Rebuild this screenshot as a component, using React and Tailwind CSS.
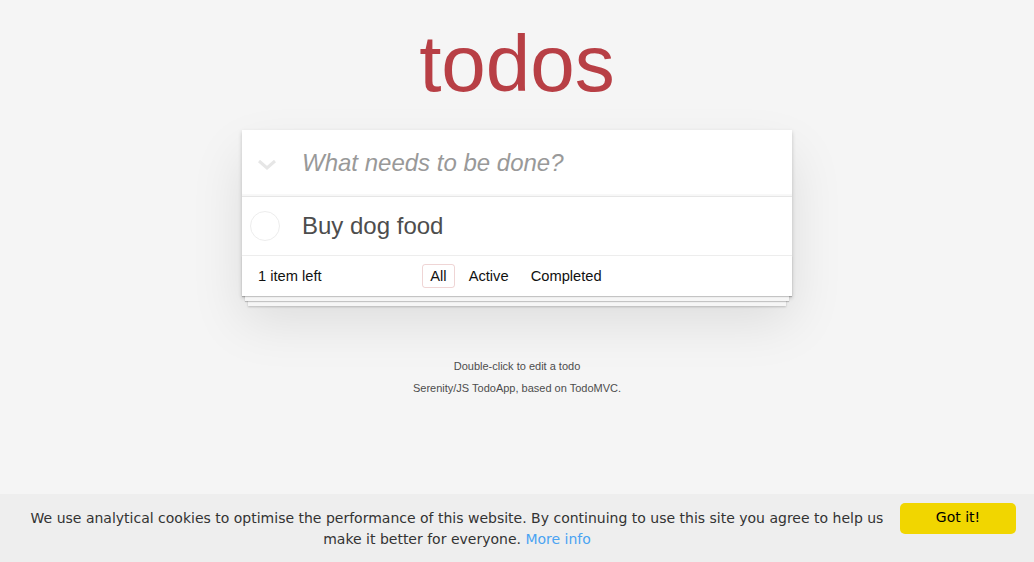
export default function App() {
  return (
    <div className="min-h-screen bg-[#f5f5f5] font-['Liberation_Sans',Arial,sans-serif] text-[14px] leading-[1.4] text-[#4d4d4d]">
      <div className="w-[550px] mx-auto pt-[8px]">
        <h1 className="text-[80px] leading-[112px] text-center text-[#b83f45] font-normal">todos</h1>
        <section className="mt-[10px] bg-white shadow-[0_2px_4px_0_rgba(0,0,0,0.2),0_25px_50px_0_rgba(0,0,0,0.1)]">
          <header className="h-[66px] flex items-center shadow-[inset_0_-2px_1px_rgba(0,0,0,0.03)]">
            <div className="w-[60px] h-full flex items-center justify-center">
              <svg width="20" height="12" viewBox="0 0 20 12" className="ml-[-10px] mt-[4px]">
                <polyline points="2,2 10,9 18,2" fill="none" stroke="#e6e6e6" strokeWidth="3" strokeLinecap="butt" strokeLinejoin="miter" />
              </svg>
            </div>
            <input
              className="flex-1 h-full pr-[16px] bg-transparent outline-none text-[24px] text-[#4d4d4d] placeholder:italic placeholder:text-[#999] font-['Liberation_Sans',Arial,sans-serif]"
              placeholder="What needs to be done?"
            />
          </header>
          <ul className="border-t border-[#e6e6e6]">
            <li className="flex items-center border-b border-[#ededed] h-[59px]">
              <div className="w-[60px] pl-[8px] flex items-center">
                <span className="w-[30px] h-[30px] rounded-full border border-[#ededed]"></span>
              </div>
              <label className="text-[24px] leading-[1.2] text-[#4d4d4d]">Buy dog food</label>
            </li>
          </ul>
          <footer className="h-[40px] px-[15px] grid grid-cols-[1fr_auto_1fr] items-center text-[#111] text-[14.7px] leading-[20px] shadow-[0_1px_1px_rgba(0,0,0,0.2),0_8px_0_-3px_#f6f6f6,0_9px_1px_-3px_rgba(0,0,0,0.2),0_16px_0_-6px_#f6f6f6,0_17px_2px_-6px_rgba(0,0,0,0.2)]">
            <span className="pl-[1px]">1 item left</span>
            <ul className="flex items-center mr-[2px]">
              <li>
                <a className="block m-[3px] px-[7px] py-[3px] leading-[16px] border border-[rgba(175,47,47,0.2)] rounded-[3px]">All</a>
              </li>
              <li>
                <a className="block m-[3px] px-[7px] py-[3px] leading-[16px] border border-transparent rounded-[3px]">Active</a>
              </li>
              <li>
                <a className="block m-[3px] px-[7px] py-[3px] leading-[16px] border border-transparent rounded-[3px]">Completed</a>
              </li>
            </ul>
            <span></span>
          </footer>
        </section>
        <div className="mt-[65px] flex flex-col gap-[11px] text-center text-[11px] leading-[11px] text-[#4d4d4d]">
          <p>Double-click to edit a todo</p>
          <p>Serenity/JS TodoApp, based on TodoMVC.</p>
        </div>
      </div>
      <div className="fixed bottom-0 inset-x-0 h-[68px] bg-[#eeeeee] flex items-center pl-[29px] pr-[18px] gap-[15px] font-['DejaVu_Sans',sans-serif]">
        <p className="flex-1 mt-[2px] text-center text-[14px] leading-[21px] text-[#333]">
          We use analytical cookies to optimise the performance of this website. By continuing to use this site you agree to help us make it better for everyone.{" "}
          <a className="text-[#4aa3f2]">More info</a>
        </p>
        <button className="w-[116px] h-[31px] bg-[#f1d600] rounded-[5px] text-[14px] text-black mt-[-20px]">Got it!</button>
      </div>
    </div>
  );
}
